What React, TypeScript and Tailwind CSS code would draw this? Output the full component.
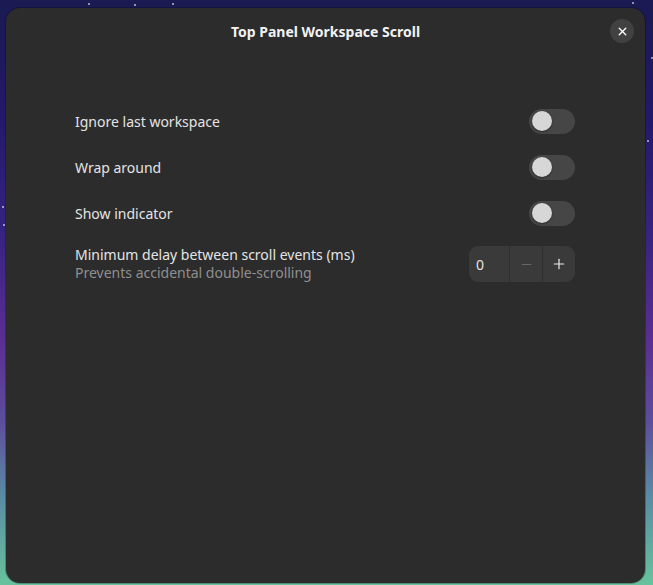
import { X, Minus, Plus } from 'lucide-react';

type ToggleRowProps = {
  label: string;
};

function Toggle() {
  return (
    <div className="flex h-[25px] w-[46px] items-center rounded-full bg-[#464646] px-[3px]">
      <div className="h-[20px] w-[20px] rounded-full bg-[#d7d7d7] shadow-[0_1px_2px_rgba(0,0,0,0.4)]" />
    </div>
  );
}

function ToggleRow({ label }: ToggleRowProps) {
  return (
    <div className="flex h-[46px] items-center justify-between">
      <span className="text-[14px] text-[#e4e4e4]">{label}</span>
      <Toggle />
    </div>
  );
}

const stars = [
  { x: 88, y: 3 },
  { x: 134, y: 4 },
  { x: 172, y: 3 },
  { x: 632, y: 2 },
  { x: 651, y: 57 },
  { x: 2, y: 206 },
  { x: 3, y: 224 },
  { x: 647, y: 140 },
];

export default function App() {
  return (
    <div
      className="relative flex h-[585px] w-full overflow-hidden bg-[linear-gradient(to_bottom,#1b1a52_0%,#22196a_20%,#3a2482_42%,#5a2e92_58%,#5d4d9c_72%,#5a8ca4_85%,#68c29c_100%)]"
      style={{ fontFamily: '"Noto Sans", "Open Sans", sans-serif' }}
    >
      {stars.map((s, i) => (
        <div
          key={i}
          className="absolute h-[2px] w-[2px] rounded-full bg-white/70"
          style={{ left: s.x, top: s.y }}
        />
      ))}

      <div className="ml-[6px] mt-[8px] flex h-[575px] w-[639px] flex-col rounded-[14px] bg-[#2c2c2c] shadow-[0_0_0_1px_rgba(0,0,0,0.25)]">
        <div className="relative flex h-[46px] shrink-0 items-center justify-center">
          <span className="text-[14px] font-bold text-[#f2f2f2]">Top Panel Workspace Scroll</span>
          <button className="absolute right-[11px] top-[11px] flex h-[24px] w-[24px] items-center justify-center rounded-full bg-[#414141] text-white">
            <X size={13} strokeWidth={2.5} />
          </button>
        </div>

        <div className="ml-[69px] mr-[70px] mt-[44px] flex flex-col">
          <ToggleRow label="Ignore last workspace" />
          <ToggleRow label="Wrap around" />
          <ToggleRow label="Show indicator" />

          <div className="flex h-[56px] items-center justify-between">
            <div className="flex flex-col leading-[18px]">
              <span className="text-[14px] text-[#e4e4e4]">Minimum delay between scroll events (ms)</span>
              <span className="text-[14px] text-[#8f8f8f]">Prevents accidental double-scrolling</span>
            </div>
            <div className="flex h-[36px] w-[106px] items-stretch rounded-[9px] bg-[#3a3a3a]">
              <div className="flex w-[40px] items-center pl-[7px] text-[14px] text-[#e4e4e4]">0</div>
              <div className="flex w-[33px] items-center justify-center border-l border-[#2f2f2f] text-[#6c6c6c]">
                <Minus size={15} strokeWidth={1.5} />
              </div>
              <div className="flex w-[33px] items-center justify-center border-l border-[#2f2f2f] text-[#ececec]">
                <Plus size={16} strokeWidth={1.75} />
              </div>
            </div>
          </div>
        </div>
      </div>
    </div>
  );
}
